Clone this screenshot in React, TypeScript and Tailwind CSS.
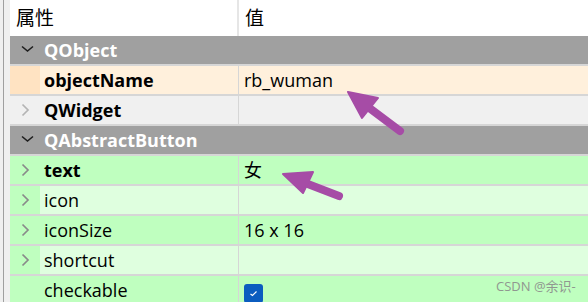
import React from 'react';

type Row = {
  name: string;
  value?: React.ReactNode;
  kind: 'group' | 'prop';
  bold?: boolean;
  expand?: boolean;
  bg?: string;
  strip?: string;
  arrowCls?: string;
};

const font = { fontFamily: '"Open Sans", "Noto Sans CJK SC", sans-serif' };

function Chevron({ cls }: { cls: string }) {
  return (
    <svg width="9" height="14" viewBox="0 0 9 14" className={cls}>
      <path d="M1.5 1.5 L7 7 L1.5 12.5" fill="none" stroke="currentColor" strokeWidth="1.7" />
    </svg>
  );
}

function Down() {
  return (
    <svg width="13" height="8" viewBox="0 0 13 8" className="text-[#1e1e1e]">
      <path d="M1 1.5 L6.5 6 L12 1.5" fill="none" stroke="currentColor" strokeWidth="1.6" />
    </svg>
  );
}

const rows: Row[] = [
  { name: 'QObject', kind: 'group' },
  { name: 'objectName', kind: 'prop', bold: true, value: 'rb_wuman', bg: 'bg-[#fff0dc]', strip: 'bg-[#ffe3c2]' },
  { name: 'QWidget', kind: 'prop', bold: true, expand: true, bg: 'bg-[#f0f0f0]', strip: 'bg-[#f0f0f0]', arrowCls: 'text-[#b4b4b4]' },
  { name: 'QAbstractButton', kind: 'group' },
  { name: 'text', kind: 'prop', bold: true, expand: true, value: '女', bg: 'bg-[#bfffbf]', strip: 'bg-[#bfffbf]', arrowCls: 'text-[#8a8a8a]' },
  { name: 'icon', kind: 'prop', expand: true, bg: 'bg-[#dfffdf]', strip: 'bg-[#bfffbf]', arrowCls: 'text-[#8a8a8a]' },
  { name: 'iconSize', kind: 'prop', expand: true, value: '16 x 16', bg: 'bg-[#bfffbf]', strip: 'bg-[#bfffbf]', arrowCls: 'text-[#8a8a8a]' },
  { name: 'shortcut', kind: 'prop', expand: true, bg: 'bg-[#dfffdf]', strip: 'bg-[#bfffbf]', arrowCls: 'text-[#8a8a8a]' },
  {
    name: 'checkable',
    kind: 'prop',
    bg: 'bg-[#bfffbf]',
    strip: 'bg-[#bfffbf]',
    value: (
      <span className="mt-[6px] flex h-[19px] w-[19px] items-center justify-center rounded-[3px] bg-[#0b5cbf]">
        <svg width="9" height="7" viewBox="0 0 9 7">
          <path d="M1.5 4 L3.5 5.5 L7.5 1.5" fill="none" stroke="#ffffff" strokeWidth="1.2" />
        </svg>
      </span>
    ),
  },
];

export default function App() {
  return (
    <div className="relative flex h-[302px] w-[588px] overflow-hidden bg-[#f0f0f0] text-[18px] text-black" style={font}>
      <div className="flex w-[10px] shrink-0">
        <div className="w-[3px] bg-[#f0f0f0]" />
        <div className="w-px bg-[#a0a0a0]" />
        <div className="flex-1 bg-[#f0f0f0]" />
      </div>
      <div className="flex flex-1 flex-col">
        <div className="flex h-[36px] shrink-0 bg-white text-[19px]">
          <div className="flex w-[229px] items-center border-r-2 border-[#e6e6e6] pl-[6px]">属性</div>
          <div className="flex flex-1 items-center pl-[6px]">值</div>
        </div>
        {rows.map((r) =>
          r.kind === 'group' ? (
            <div key={r.name} className="flex h-[30px] shrink-0 items-start border-b-2 border-[#d6d6d6] bg-[#a0a0a0]">
              <div className="flex h-[28px] w-[34px] items-center justify-center pb-[2px]">
                <Down />
              </div>
              <div className="flex h-[28px] items-center font-bold text-white">{r.name}</div>
            </div>
          ) : (
            <div key={r.name} className={`flex h-[30px] shrink-0 border-b-2 border-[#d6d6d6] ${r.bg}`}>
              <div className={`flex w-[30px] items-center justify-center ${r.strip}`}>
                {r.expand && <Chevron cls={r.arrowCls ?? ''} />}
              </div>
              <div className={`flex w-[199px] items-center border-r border-[#d6d6d6] pl-[4px] ${r.bold ? 'font-bold' : ''}`}>
                {r.name}
              </div>
              <div className="flex flex-1 items-center pl-[5px]">{r.value}</div>
            </div>
          )
        )}
      </div>

      <svg className="absolute left-0 top-0" width="588" height="302" viewBox="0 0 588 302">
        <g fill="#a64ca6" stroke="#a64ca6">
          <line x1="400" y1="131" x2="364" y2="104" strokeWidth="8" strokeLinecap="round" />
          <polygon points="348,92 378,98 362,118" strokeWidth="2" strokeLinejoin="round" />
          <line x1="339" y1="196" x2="300" y2="181" strokeWidth="8" strokeLinecap="round" />
          <polygon points="283,174 313,172 303,193" strokeWidth="2" strokeLinejoin="round" />
        </g>
      </svg>

      <div className="absolute left-[496px] top-[277px] text-[13px] text-[#8c8c8c] opacity-90" style={font}>
        CSDN @余识-
      </div>
    </div>
  );
}
